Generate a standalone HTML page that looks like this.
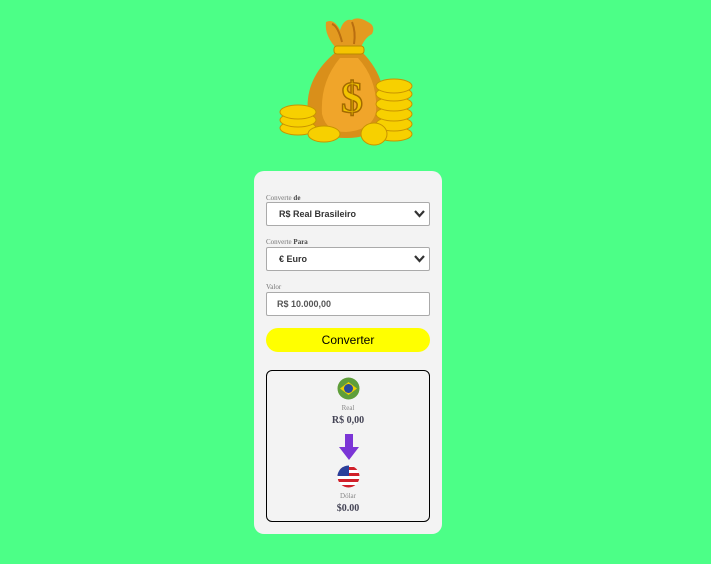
<!DOCTYPE html>
<html><head><style>
body{margin:0;width:711px;height:564px;background:#4cff87;position:relative;overflow:hidden;font-family:"Liberation Sans",sans-serif}
.card{position:absolute;left:254px;top:171px;width:188px;height:363px;background:#f3f3f3;border-radius:10px}
.lbl{position:absolute;left:12px;font-family:"Liberation Serif",serif;font-size:7px;color:#777}
.lbl b{color:#444}
.fld{position:absolute;left:12px;width:162px;height:22px;background:#fff;border:1px solid #aaa;border-radius:2px;font-size:9px;color:#333;line-height:22px;box-sizing:content-box}
.fld span{position:absolute;left:12px;font-weight:bold}
.chev{position:absolute;right:4px;top:6px}
.btn{position:absolute;left:12px;top:157px;width:164px;height:24px;background:#ff0;border-radius:12px;text-align:center;line-height:24px;font-size:12px;color:#000}
.res{position:absolute;left:12px;top:199px;width:162px;height:150px;border:1px solid #000;border-radius:6px;text-align:center;font-family:"Liberation Serif",serif}
.sm{position:absolute;width:100%;font-size:7px;color:#888}
.bg{position:absolute;width:100%;font-size:10px;font-weight:bold;color:#445}
</style></head><body>
<svg style="position:absolute;left:276px;top:16px" width="140" height="134" viewBox="0 0 140 134">
<path d="M60 36 Q28 62 32 98 Q36 122 70 122 Q104 122 108 98 Q112 62 86 36 Z" fill="#d98f1a"/>
<path d="M64 42 Q44 66 46 98 Q50 116 70 116 Q96 114 100 96 Q102 64 82 42Z" fill="#f0a52a"/>
<path d="M50 6 Q58 2 64 14 Q68 2 76 4 Q82 0 92 6 Q100 10 96 18 Q88 22 84 34 L62 34 Q48 20 50 6Z" fill="#e39a20"/>
<path d="M56 8 Q62 10 66 26 M76 6 Q80 16 78 28" stroke="#b96e10" stroke-width="2" fill="none"/>
<rect x="58" y="30" width="30" height="8" rx="3" fill="#f5c400" stroke="#b98a00"/>
<text x="76" y="96" font-family="Liberation Serif" font-size="44" font-weight="bold" fill="#f2c400" stroke="#a36a00" stroke-width="1.5" text-anchor="middle">$</text>
<g fill="#f7d000" stroke="#c89400">
<ellipse cx="22" cy="112" rx="18" ry="7"/><ellipse cx="22" cy="104" rx="18" ry="7"/><ellipse cx="22" cy="96" rx="18" ry="7"/>
<ellipse cx="48" cy="118" rx="16" ry="8"/>
<ellipse cx="118" cy="118" rx="18" ry="7"/><ellipse cx="118" cy="108" rx="18" ry="7"/><ellipse cx="118" cy="98" rx="18" ry="7"/><ellipse cx="118" cy="88" rx="18" ry="7"/><ellipse cx="118" cy="78" rx="18" ry="7"/><ellipse cx="118" cy="70" rx="18" ry="7"/>
<ellipse cx="98" cy="118" rx="13" ry="11"/>
</g></svg>
<div class="card">
<div class="lbl" style="top:23px">Converte <b>de</b></div>
<div class="fld" style="top:31px"><span>R$ Real Brasileiro</span><svg class="chev" width="11" height="9"><path d="M1 2 L5.5 7 L10 2" stroke="#333" stroke-width="2.2" fill="none"/></svg></div>
<div class="lbl" style="top:67px">Converte <b>Para</b></div>
<div class="fld" style="top:76px"><span>€ Euro</span><svg class="chev" width="11" height="9"><path d="M1 2 L5.5 7 L10 2" stroke="#333" stroke-width="2.2" fill="none"/></svg></div>
<div class="lbl" style="top:112px">Valor</div>
<div class="fld" style="top:121px;color:#555"><span style="left:10px">R$ 10.000,00</span></div>
<div class="btn">Converter</div>
<div class="res">
<svg style="position:absolute;left:70px;top:6px" width="23" height="23"><circle cx="11.5" cy="11.5" r="11" fill="#5f9e3a"/><path d="M3 11.5 L11.5 5 L20 11.5 L11.5 18Z" fill="#f0d000"/><circle cx="11.5" cy="11.5" r="4.5" fill="#2a4a9a"/></svg>
<div class="sm" style="top:33px">Real</div>
<div class="bg" style="top:44px">R$ 0,00</div>
<svg style="position:absolute;left:72px;top:63px" width="20" height="26"><path d="M6 0 H14 V13 H20 L10 26 L0 13 H6Z" fill="#7b35d6"/></svg>
<svg style="position:absolute;left:70px;top:94px" width="23" height="23"><defs><clipPath id="c"><circle cx="11.5" cy="11.5" r="11"/></clipPath></defs><g clip-path="url(#c)"><rect width="23" height="23" fill="#fff"/><rect y="2" width="23" height="3" fill="#d0202a"/><rect y="8" width="23" height="3" fill="#d0202a"/><rect y="14" width="23" height="3" fill="#d0202a"/><rect y="20" width="23" height="3" fill="#d0202a"/><rect width="12" height="11" fill="#2a3f9a"/></g></svg>
<div class="sm" style="top:121px">Dólar</div>
<div class="bg" style="top:132px">$0.00</div>
</div>
</div>
</body></html>
